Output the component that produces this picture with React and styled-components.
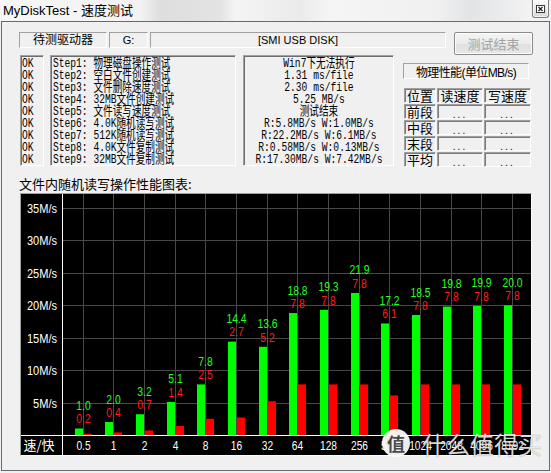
import React from "react";
import styled, { createGlobalStyle } from "styled-components";

const GlobalStyle = createGlobalStyle`
  html, body {
    margin: 0;
    padding: 0;
    background: #eceef1;
  }
  body {
    font-family: "Liberation Sans", "Noto Sans CJK SC", sans-serif;
    color: #000;
  }
`;

const Screen = styled.div`
  position: relative;
  width: 551px;
  height: 473px;
  overflow: hidden;
  background: #eef0f3;
`;

const TitleBar = styled.div`
  display: flex;
  justify-content: space-between;
  align-items: flex-start;
  height: 21px;
  background: linear-gradient(
    90deg,
    #f6f6f6 0,
    #f3f3f3 140px,
    #dedede 160px,
    #e3e3e3 220px,
    #f4f4f4 235px,
    #ebebeb 300px,
    #f5f5f5 330px,
    #f0f0f0 440px,
    #e2e4e6 470px,
    #f2f2f2 530px
  );
`;

const Title = styled.div`
  padding: 3px 0 0 3px;
  font-size: 13px;
  line-height: 15px;
`;

const CloseButton = styled.div`
  box-sizing: border-box;
  display: flex;
  align-items: center;
  justify-content: center;
  width: 17px;
  height: 18px;
  margin-right: 2px;
  border: 1px solid #7c7c7c;
  border-top: 0;
  border-radius: 0 0 3px 3px;
  background: linear-gradient(#fbfbfb, #e6e6e6 60%, #d8d8d8);
  box-shadow: inset 0 0 0 1px rgba(255, 255, 255, 0.7);
`;

const Window = styled.div`
  box-sizing: border-box;
  width: 549px;
  height: 450px;
  margin-left: 1px;
  padding: 10px 0 0 17px;
  border: 1px solid #6a6a6a;
  background: #f0f0f0;
`;

const TopRow = styled.div`
  display: flex;
  align-items: flex-start;
`;

const Field = styled.div`
  box-sizing: border-box;
  display: flex;
  align-items: center;
  justify-content: center;
  width: ${(p) => p.$w}px;
  height: 16px;
  margin-right: ${(p) => p.$gap ?? 2}px;
  border: 1px solid;
  border-color: #a0a0a0 #ffffff #ffffff #a0a0a0;
  font-size: ${(p) => (p.$small ? 11 : 12)}px;
  line-height: 14px;
  white-space: nowrap;
`;

const Button = styled.div`
  box-sizing: border-box;
  display: flex;
  align-items: center;
  justify-content: center;
  width: 79px;
  height: 23px;
  border: 1px solid #8b8b8b;
  border-radius: 2px;
  box-shadow: inset 0 0 0 1px #fcfcfc;
  background: linear-gradient(#f4f4f4, #ececec 50%, #e0e0e0 51%, #e8e8e8);
  color: #a3a3a3;
  font-size: 13px;
`;

const Panels = styled.div`
  display: flex;
  align-items: flex-start;
  margin-left: 1px;
`;

const ListBox = styled.div`
  box-sizing: border-box;
  width: ${(p) => p.$w}px;
  height: 111px;
  margin-right: ${(p) => p.$gap}px;
  padding: 2px 0 0 ${(p) => p.$pad ?? 1}px;
  border: 1px solid;
  border-color: #a0a0a0 #ffffff #ffffff #a0a0a0;
  box-shadow: inset 1px 1px 0 #6d6d6d;
  overflow: hidden;
`;

// 비트맵 글꼴처럼 좁게 보이도록 가로로 눌러줌
const ListText = styled.div`
  width: 135%;
  transform: scaleX(0.74);
  transform-origin: 0 0;
  font-family: "Liberation Mono", "Noto Sans CJK SC", monospace;
  font-size: 13px;
  line-height: 12px;
  white-space: pre;
  text-align: ${(p) => (p.$center ? "center" : "left")};
`;

const Side = styled.div`
  display: flex;
  flex-direction: column;
  width: 128px;
  padding-top: 8px;
`;

const SideTitle = styled.div`
  box-sizing: border-box;
  display: flex;
  align-items: center;
  justify-content: center;
  width: 126px;
  height: 16px;
  border: 1px solid;
  border-color: #a0a0a0 #ffffff #ffffff #a0a0a0;
  font-size: 12px;
  letter-spacing: -0.6px;
  white-space: nowrap;
`;

const PerfTable = styled.div`
  display: grid;
  grid-template-columns: 32px 46px 47px;
  grid-auto-rows: 15px;
  gap: 1px;
  margin: 9px 0 0 1px;
`;

const Cell = styled.div`
  box-sizing: border-box;
  display: flex;
  align-items: center;
  justify-content: center;
  border: 1px solid;
  border-color: #a0a0a0 #ffffff #ffffff #a0a0a0;
  box-shadow: inset 1px 1px 0 #7a7a7a;
  font-family: "Noto Sans CJK SC", sans-serif;
  font-size: 13px;
  line-height: 13px;
  white-space: nowrap;
`;

const Dots = styled.span`
  margin-top: 3px;
  font-size: 10px;
  letter-spacing: 2px;
  color: #202020;
`;

const ChartTitle = styled.div`
  margin-top: 9px;
  font-family: "Noto Sans CJK SC", sans-serif;
  font-size: 13px;
  line-height: 16px;
`;

const ChartFrame = styled.div`
  box-sizing: border-box;
  width: 512px;
  height: 263px;
  margin: 1px 0 0 1px;
  border: 1px solid;
  border-color: #a0a0a0 #ffffff #ffffff #a0a0a0;
  background: #000;

  svg {
    display: block;
  }
`;

const Stamp = styled.div`
  position: absolute;
  left: 382px;
  top: 429px;
  width: 28px;
  height: 28px;
  border-radius: 50%;
  background: rgba(255, 255, 255, 0.93);
  display: flex;
  align-items: center;
  justify-content: center;
  font-family: "Noto Sans CJK SC", sans-serif;
  font-size: 18px;
  font-weight: 700;
  color: #4a4a4a;
`;

const StampText = styled.div`
  position: absolute;
  left: 422px;
  top: 430px;
  font-family: "Noto Sans CJK SC", sans-serif;
  font-size: 24px;
  line-height: 28px;
  color: rgba(255, 255, 255, 0.85);
  text-shadow: 0 0 1px rgba(0, 0, 0, 0.55);
`;

const steps = [
  "Step1: 物理磁盘操作测试",
  "Step2: 空白文件创建测试",
  "Step3: 文件删除速度测试",
  "Step4: 32MB文件创建测试",
  "Step5: 文件读写速度测试",
  "Step6: 4.0K随机读写测试",
  "Step7: 512K随机读写测试",
  "Step8: 4.0K文件复制测试",
  "Step9: 32MB文件复制测试",
];

const results = [
  "Win7下无法执行",
  "1.31 ms/file",
  "2.30 ms/file",
  "5.25 MB/s",
  "测试结束",
  "R:5.8MB/s W:1.0MB/s",
  "R:22.2MB/s W:6.1MB/s",
  "R:0.58MB/s W:0.13MB/s",
  "R:17.30MB/s W:7.42MB/s",
];

const rows = ["前段", "中段", "末段", "平均"];

const blocks = ["0.5", "1", "2", "4", "8", "16", "32", "64", "128", "256", "512", "1024", "2048", "4096", "8192"];
const readSpeed = [1.0, 2.0, 3.2, 5.1, 7.8, 14.4, 13.6, 18.8, 19.3, 21.9, 17.2, 18.5, 19.8, 19.9, 20.0];
const writeSpeed = [0.2, 0.4, 0.7, 1.4, 2.5, 2.7, 5.2, 7.8, 7.8, 7.8, 6.1, 7.8, 7.8, 7.8, 7.8];

// 차트 좌표 (svg 안쪽 기준)
const OX = 21;
const OY = 193;
const ZERO = 434 - OY;
const PX_PER_MB = 6.486;
const colX = (i) => Math.round(82.5 + i * 30.68) - OX;
const valY = (v) => ZERO - v * PX_PER_MB;

const Txt = ({ x, y, color, anchor = "middle", sx = 0.8, size = 13, family = "Liberation Sans, sans-serif", children }) => (
  <g transform={`translate(${x} ${y}) scale(${sx} 1)`}>
    <text textAnchor={anchor} fill={color} fontSize={size} fontFamily={family}>
      {children}
    </text>
  </g>
);

const SpeedChart = () => {
  const axisX = 62 - OX;
  return (
    <svg width="510" height="261" viewBox="0 0 510 261">
      <rect width="510" height="261" fill="#000" />
      {[5, 10, 15, 20, 25, 30, 35].map((v) => {
        const y = Math.round(valY(v)) + 0.5;
        return (
          <g key={v}>
            <line x1={axisX} x2="510" y1={y} y2={y} stroke="#484848" />
            <Txt x={57 - OX} y={y + 4.5} color="#fff" anchor="end" sx={0.85}>
              {v}M/s
            </Txt>
          </g>
        );
      })}
      {blocks.map((b, i) => (
        <line key={b} x1={colX(i) + 0.5} x2={colX(i) + 0.5} y1="0" y2={ZERO} stroke="#484848" />
      ))}
      {blocks.map((b, i) => {
        const x = colX(i);
        const gh = readSpeed[i] * PX_PER_MB;
        const rh = writeSpeed[i] * PX_PER_MB;
        const top = ZERO - gh;
        return (
          <g key={b}>
            <rect x={x - 8} y={top} width="8" height={gh} fill="#00ff00" />
            <rect x={x + 1} y={ZERO - rh} width="8" height={rh} fill="#ff0000" />
            <Txt x={x + 0.5} y={top - 18.5} color="#22ff22">
              {readSpeed[i].toFixed(1)}
            </Txt>
            <Txt x={x + 0.5} y={top - 5.2} color="#ff1a1a">
              {writeSpeed[i].toFixed(1)}
            </Txt>
            <Txt x={x + 0.5} y={449 - OY} color="#fff" size={12} sx={0.85}>
              {b}
            </Txt>
          </g>
        );
      })}
      <line x1="0" x2="510" y1={ZERO + 0.5} y2={ZERO + 0.5} stroke="#fff" />
      <line x1={axisX + 0.5} x2={axisX + 0.5} y1="0" y2="261" stroke="#fff" />
      <Txt x={39 - OX} y={449 - OY} color="#fff" sx={1} size={13} family="Noto Sans CJK SC, sans-serif">
        速/快
      </Txt>
    </svg>
  );
};

export default function App() {
  return (
    <Screen>
      <GlobalStyle />
      <TitleBar>
        <Title>MyDiskTest - 速度测试</Title>
        <CloseButton>
          <svg width="9" height="8" viewBox="0 0 9 8">
            <rect x="0.5" y="0.5" width="8" height="7" fill="#fff" stroke="#3a3a3a" />
            <path d="M2.5 2 L6.5 6 M6.5 2 L2.5 6" stroke="#222" strokeWidth="1.2" />
          </svg>
        </CloseButton>
      </TitleBar>
      <Window>
        <TopRow>
          <Field $w={88}>待测驱动器</Field>
          <Field $w={39} $small>
            G:
          </Field>
          <Field $w={296} $gap={8} $small>
            [SMI USB DISK]
          </Field>
          <Button>测试结束</Button>
        </TopRow>
        <Panels>
          <ListBox $w={24} $gap={6} $pad={1}>
            <ListText>{steps.map(() => "OK").join("\n")}</ListText>
          </ListBox>
          <ListBox $w={186} $gap={7} $pad={2}>
            <ListText>{steps.join("\n")}</ListText>
          </ListBox>
          <ListBox $w={151} $gap={9}>
            <ListText $center>{results.join("\n")}</ListText>
          </ListBox>
          <Side>
            <SideTitle>物理性能(单位MB/s)</SideTitle>
            <PerfTable>
              <Cell>位置</Cell>
              <Cell>读速度</Cell>
              <Cell>写速度</Cell>
              {rows.map((r) => (
                <React.Fragment key={r}>
                  <Cell>{r}</Cell>
                  <Cell>
                    <Dots>...</Dots>
                  </Cell>
                  <Cell>
                    <Dots>...</Dots>
                  </Cell>
                </React.Fragment>
              ))}
            </PerfTable>
          </Side>
        </Panels>
        <ChartTitle>文件内随机读写操作性能图表:</ChartTitle>
        <ChartFrame>
          <SpeedChart />
        </ChartFrame>
      </Window>
      <Stamp>值</Stamp>
      <StampText>什么值得买</StampText>
    </Screen>
  );
}
